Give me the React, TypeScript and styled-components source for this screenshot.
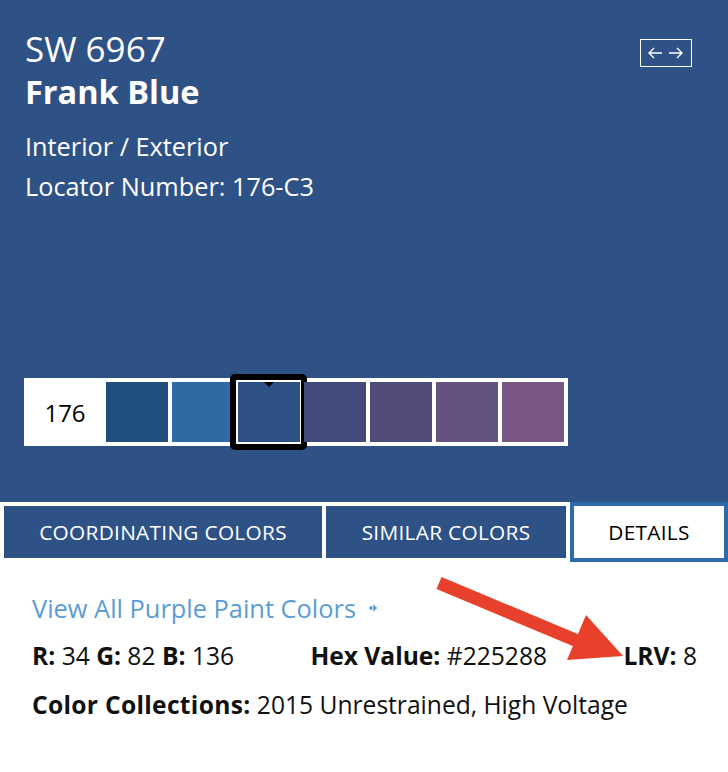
import React from "react";
import styled, { createGlobalStyle } from "styled-components";

const GlobalStyle = createGlobalStyle`
  html, body { margin: 0; padding: 0; background: #ffffff; }
  body { font-family: "Open Sans", "Noto Sans", sans-serif; -webkit-font-smoothing: antialiased; }
  * { box-sizing: border-box; }
`;

const Page = styled.div`
  position: relative;
  width: 728px;
  height: 772px;
  background: #ffffff;
  overflow: hidden;
`;

const Hero = styled.section`
  height: 502px;
  background: #2f5286;
  color: #ffffff;
  display: flex;
  flex-direction: column;
  justify-content: space-between;
  padding: 28px 36px 56px 24px;
`;

const HeroTop = styled.div`
  display: flex;
  justify-content: space-between;
  align-items: flex-start;
`;

const TitleBlock = styled.div`
  display: flex;
  flex-direction: column;
  padding-left: 1px;
`;

const Code = styled.div`
  font-size: 35px;
  line-height: 42px;
  font-weight: 400;
`;

const Name = styled.div`
  font-size: 32.5px;
  line-height: 36px;
  font-weight: 700;
  margin-top: 4px;
`;

const Meta = styled.div<{ $first?: boolean }>`
  font-size: 25.3px;
  line-height: 32px;
  margin-top: ${(p) => (p.$first ? "20px" : "8px")};
`;

const NavButton = styled.div`
  width: 52px;
  height: 28px;
  border: 1.5px solid #ffffff;
  margin-top: 11px;
  display: flex;
  align-items: center;
  justify-content: center;
`;

const Strip = styled.div`
  align-self: flex-start;
  display: flex;
  gap: 4px;
  padding: 4px;
  background: #ffffff;
  width: 544px;
`;

const NumberCell = styled.div`
  width: 74px;
  height: 60px;
  display: flex;
  align-items: center;
  justify-content: center;
  color: #000000;
  font-size: 24px;
`;

const Swatch = styled.div<{ $color: string; $selected?: boolean }>`
  position: relative;
  width: 62px;
  height: 60px;
  background: ${(p) => p.$color};
  ${(p) =>
    p.$selected
      ? `
    &::before {
      content: "";
      position: absolute;
      top: -8px; left: -8px; right: -7px; bottom: -8px;
      border: 6px solid #000000;
      border-radius: 5px;
    }
    &::after {
      content: "";
      position: absolute;
      top: 0;
      left: 26px;
      border-left: 5px solid transparent;
      border-right: 5px solid transparent;
      border-top: 5px solid #000000;
    }
  `
      : ""}
`;

const Tabs = styled.nav`
  display: flex;
  align-items: flex-start;
  gap: 4px;
  padding-left: 4px;
`;

const Tab = styled.div<{ $width: number; $active?: boolean }>`
  width: ${(p) => p.$width}px;
  height: ${(p) => (p.$active ? "60px" : "52px")};
  margin-top: ${(p) => (p.$active ? "0" : "4px")};
  background: ${(p) => (p.$active ? "#ffffff" : "#2f5286")};
  border: ${(p) => (p.$active ? "4px solid #2e6aa8" : "none")};
  color: ${(p) => (p.$active ? "#000000" : "#ffffff")};
  display: flex;
  align-items: center;
  justify-content: center;
  font-size: 20.8px;
  letter-spacing: 0.3px;
  text-transform: uppercase;
`;

const Details = styled.section`
  padding: 30px 31px 0 32px;
  display: flex;
  flex-direction: column;
`;

const LinkRow = styled.div`
  display: flex;
  align-items: center;
  gap: 12px;
  color: #5a9dd3;
  font-size: 25.4px;
  line-height: 32px;
`;

const InfoRow = styled.div<{ $spread?: boolean }>`
  display: flex;
  justify-content: ${(p) => (p.$spread ? "space-between" : "flex-start")};
  color: #111111;
  font-size: 24.6px;
  line-height: 32px;
  margin-top: ${(p) => (p.$spread ? "16px" : "17px")};
`;

const Label = styled.b<{ $wide?: boolean }>`
  font-weight: 700;
  letter-spacing: ${(p) => (p.$wide ? "0.3px" : "0")};
`;

const Annotation = styled.svg`
  position: absolute;
  left: 0;
  top: 0;
  pointer-events: none;
`;

const swatches = [
  "#21507f",
  "#2f6ba3",
  "#2f5286",
  "#424b7b",
  "#514c7a",
  "#64537e",
  "#775882",
];

export default function App() {
  return (
    <Page>
      <GlobalStyle />
      <Hero>
        <HeroTop>
          <TitleBlock>
            <Code>SW 6967</Code>
            <Name>Frank Blue</Name>
            <Meta $first>Interior / Exterior</Meta>
            <Meta>Locator Number: 176-C3</Meta>
          </TitleBlock>
          <NavButton>
            <svg width="38" height="14" viewBox="0 0 38 14" fill="none" stroke="#ffffff" strokeWidth="1.4">
              <path d="M15 7H2M7 2L2 7l5 5" />
              <path d="M22 7h13M30 2l5 5-5 5" />
            </svg>
          </NavButton>
        </HeroTop>
        <Strip>
          <NumberCell>176</NumberCell>
          {swatches.map((c, i) => (
            <Swatch key={i} $color={c} $selected={i === 2} />
          ))}
        </Strip>
      </Hero>
      <Tabs>
        <Tab $width={318}>Coordinating Colors</Tab>
        <Tab $width={240}>Similar Colors</Tab>
        <Tab $width={158} $active>
          Details
        </Tab>
      </Tabs>
      <Details>
        <LinkRow>
          <span>View All Purple Paint Colors</span>
          <svg width="10" height="10" viewBox="0 0 10 10" fill="none" stroke="#5a9dd3" strokeWidth="1.6">
            <path d="M1 5h7M5 2l3 3-3 3M3 3v4" />
          </svg>
        </LinkRow>
        <InfoRow $spread>
          <span>
            <Label>R:</Label> 34 <Label>G:</Label> 82 <Label>B:</Label> 136
          </span>
          <span>
            <Label>Hex Value:</Label> #225288
          </span>
          <span>
            <Label>LRV:</Label> 8
          </span>
        </InfoRow>
        <InfoRow>
          <span>
            <Label $wide>Color Collections:</Label> 2015 Unrestrained, High Voltage
          </span>
        </InfoRow>
      </Details>
      <Annotation width="728" height="772" viewBox="0 0 728 772">
        <path d="M439 583 L592 647" stroke="#e8412b" strokeWidth="13" />
        <polygon points="586,615 567,660 623,656" fill="#e8412b" />
      </Annotation>
    </Page>
  );
}
